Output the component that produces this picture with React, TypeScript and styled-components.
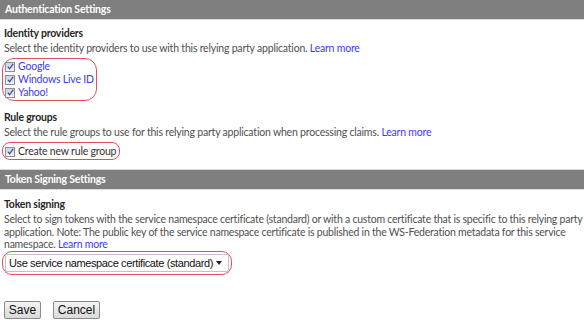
import React from "react";
import styled, { createGlobalStyle } from "styled-components";

const Global = createGlobalStyle`
  html, body { margin: 0; padding: 0; background: #fff; }
  body {
    font-family: "Segoe UI", Lato, "Liberation Sans", sans-serif;
    font-size: 10.5px;
    letter-spacing: -0.2px;
    color: #4a4a4a;
  }
`;

const Page = styled.div`
  width: 584px;
  height: 320px;
  overflow: hidden;
  display: flex;
  flex-direction: column;
`;

const SectionHeader = styled.div<{ $mt?: number; $top?: boolean }>`
  height: 19px;
  background: #7f7f7f;
  border-top: ${(p) => (p.$top ? "1px solid #d8d8d8" : "none")};
  border-bottom: 1px solid #dcdcdc;
  margin-top: ${(p) => p.$mt ?? 0}px;
  color: #fff;
  font-weight: bold;
  font-size: 10.5px;
  line-height: 19px;
  padding-left: 5px;
`;

const Section = styled.div<{ $pt?: number }>`
  padding: ${(p) => p.$pt ?? 5}px 4px 0 4px;
  display: flex;
  flex-direction: column;
  align-items: flex-start;
`;

const Title = styled.div`
  font-weight: bold;
  color: #262626;
  line-height: 15px;
`;

const Desc = styled.div<{ $mb?: number; $lh?: number; $ls?: number }>`
  line-height: ${(p) => p.$lh ?? 13}px;
  margin-top: 1px;
  margin-bottom: ${(p) => p.$mb ?? 3}px;
  letter-spacing: ${(p) => p.$ls ?? -0.2}px;
  color: #505050;
  white-space: nowrap;
`;

const Link = styled.a`
  color: #3b3bf5;
  text-decoration: none;
`;

const Oval = styled.div<{ $r: number; $pad: string; $mb?: number }>`
  border: 1px solid #e0505a;
  border-radius: ${(p) => p.$r}px;
  padding: ${(p) => p.$pad};
  margin-left: -2px;
  margin-bottom: ${(p) => p.$mb ?? 0}px;
  display: flex;
  flex-direction: column;
`;

const CheckRow = styled.label`
  display: flex;
  align-items: center;
  gap: 3px;
  height: 13px;
`;

const Box = styled.span`
  width: 8px;
  height: 8px;
  border: 1px solid #8f8f9a;
  background: linear-gradient(#d3d3d8, #f3f3f5);
  display: inline-flex;
  align-items: center;
  justify-content: center;
`;

const Label = styled.span<{ $link?: boolean }>`
  color: ${(p) => (p.$link ? "#3b3bf5" : "#333")};
  line-height: 13px;
`;

const Check = () => (
  <Box>
    <svg width="7" height="7" viewBox="0 0 7 7">
      <path d="M0.8 3.6 L2.6 5.8 L6.2 0.8" fill="none" stroke="#3a4aa8" strokeWidth="1.3" />
    </svg>
  </Box>
);

const SelectBox = styled.div`
  display: flex;
  align-items: center;
  box-sizing: border-box;
  height: 18px;
  width: 224px;
  padding: 0 6px 0 3px;
  border: 1px solid #c4c4c4;
  border-radius: 2px;
  background: #fff;
  font-family: "Liberation Sans", Arial, sans-serif;
  font-size: 11px;
  letter-spacing: -0.38px;
  color: #111;
  white-space: nowrap;
`;

const Arrow = styled.span`
  width: 0;
  height: 0;
  margin-left: auto;
  border-left: 3px solid transparent;
  border-right: 3px solid transparent;
  border-top: 4px solid #222;
`;

const Buttons = styled.div`
  display: flex;
  gap: 12px;
  padding: 0 4px;
  margin-top: 26px;
`;

const Button = styled.button<{ $w: number }>`
  font-family: "Liberation Sans", Arial, sans-serif;
  font-size: 12px;
  letter-spacing: 0;
  color: #111;
  width: ${(p) => p.$w}px;
  height: 18px;
  padding: 0;
  border: 1px solid #8a8a8a;
  border-radius: 2px;
  background: linear-gradient(#f4f4f4, #dadada);
  line-height: 16px;
`;

export default function App() {
  return (
    <Page>
      <Global />
      <SectionHeader>Authentication Settings</SectionHeader>
      <Section $pt={6}>
        <Title>Identity providers</Title>
        <Desc $mb={3}>
          Select the identity providers to use with this relying party application. <Link>Learn more</Link>
        </Desc>
        <Oval $r={12} $pad="1px 2px 1px 2px">
          <CheckRow>
            <Check />
            <Label $link>Google</Label>
          </CheckRow>
          <CheckRow>
            <Check />
            <Label $link>Windows Live ID</Label>
          </CheckRow>
          <CheckRow>
            <Check />
            <Label $link>Yahoo!</Label>
          </CheckRow>
        </Oval>
      </Section>
      <Section $pt={9}>
        <Title>Rule groups</Title>
        <Desc $mb={3}>
          Select the rule groups to use for this relying party application when processing claims. <Link>Learn more</Link>
        </Desc>
        <Oval $r={8} $pad="2px 3px 1px 2px">
          <CheckRow>
            <Check />
            <Label>Create new rule group</Label>
          </CheckRow>
        </Oval>
      </Section>
      <SectionHeader $mt={9} $top>Token Signing Settings</SectionHeader>
      <Section $pt={7}>
        <Title>Token signing</Title>
        <Desc $mb={0} $lh={12.7} $ls={-0.23}>
          Select to sign tokens with the service namespace certificate (standard) or with a custom certificate that is specific to this relying party
          <br />
          application. Note: The public key of the service namespace certificate is published in the WS-Federation metadata for this service
          <br />
          namespace. <Link>Learn more</Link>
        </Desc>
        <Oval $r={10} $pad="2px 2px 2px 2px">
          <SelectBox>
            Use service namespace certificate (standard)
            <Arrow />
          </SelectBox>
        </Oval>
      </Section>
      <Buttons>
        <Button $w={37}>Save</Button>
        <Button $w={47}>Cancel</Button>
      </Buttons>
    </Page>
  );
}
